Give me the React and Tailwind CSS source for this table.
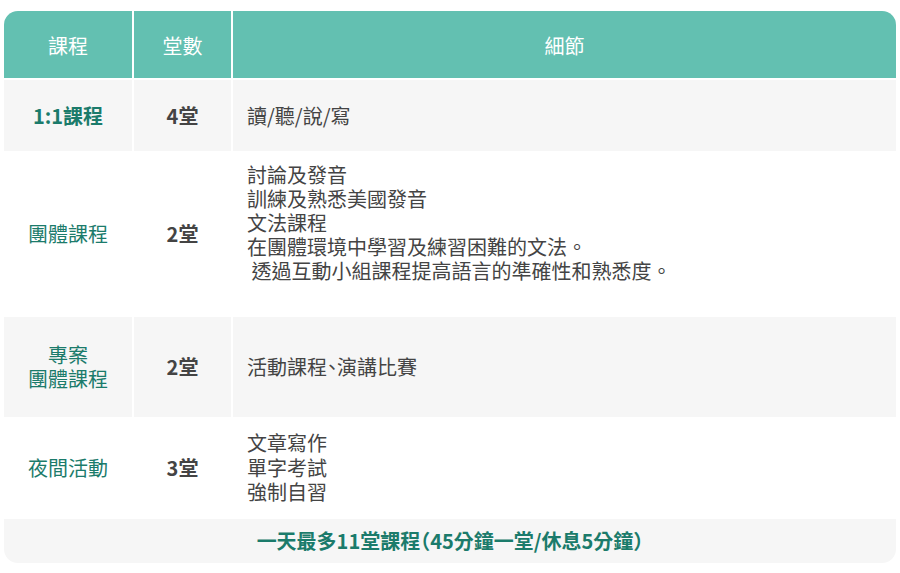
export default function App() {
    const headCell = 'flex items-center justify-center pt-[3px] bg-[#63c0b1] text-white text-[20px]'
    const nameCell = 'flex items-center justify-center text-center text-[#1b7b6b] text-[20px] leading-[24px]'
    const countCell = 'flex items-center justify-center text-[#444444] text-[20px] font-bold'
    const detailCell = 'flex items-center pl-[14px] text-[#444444] text-[20px] leading-[24px]'

    return (
        <div className="bg-white w-[900px] h-[573px] pt-[11px] pl-[4px]" style={{ fontFamily: '"Noto Sans CJK TC", "Noto Sans", sans-serif' }}>
            <div className="w-[892px] rounded-[14px] overflow-hidden flex flex-col">
                {/* Header */}
                <div className="grid grid-cols-[128px_97px_1fr] gap-x-[2px] h-[67px]">
                    <div className={headCell}>課程</div>
                    <div className={headCell}>堂數</div>
                    <div className={headCell}>細節</div>
                </div>

                {/* 1:1 */}
                <div className="grid grid-cols-[128px_97px_1fr] gap-x-[2px] h-[71px] mt-[2px]">
                    <div className={`${nameCell} bg-[#f6f6f6] font-bold`}>1:1課程</div>
                    <div className={`${countCell} bg-[#f6f6f6]`}>4堂</div>
                    <div className={`${detailCell} bg-[#f6f6f6]`}>讀/聽/說/寫</div>
                </div>

                {/* 團體課程 */}
                <div className="grid grid-cols-[128px_97px_1fr] gap-x-[2px] h-[166px]">
                    <div className={nameCell}>團體課程</div>
                    <div className={countCell}>2堂</div>
                    <div className="flex flex-col pl-[14px] pt-[12px] text-[#444444] text-[20px] leading-[24px]">
                        <span>討論及發音</span>
                        <span>訓練及熟悉美國發音</span>
                        <span>文法課程</span>
                        <span>在團體環境中學習及練習困難的文法。</span>
                        <span className="whitespace-pre"> 透過互動小組課程提高語言的準確性和熟悉度。</span>
                    </div>
                </div>

                {/* 專案 */}
                <div className="grid grid-cols-[128px_97px_1fr] gap-x-[2px] h-[100px]">
                    <div className={`${nameCell} bg-[#f6f6f6]`}>專案<br />團體課程</div>
                    <div className={`${countCell} bg-[#f6f6f6]`}>2堂</div>
                    <div className={`${detailCell} bg-[#f6f6f6] [font-feature-settings:'halt']`}>活動課程、演講比賽</div>
                </div>

                {/* 夜間活動 */}
                <div className="grid grid-cols-[128px_97px_1fr] gap-x-[2px] h-[102px]">
                    <div className={nameCell}>夜間活動</div>
                    <div className={countCell}>3堂</div>
                    <div className="flex flex-col justify-center pl-[14px] text-[#444444] text-[20px] leading-[24.5px]">
                        <span>文章寫作</span>
                        <span>單字考試</span>
                        <span>強制自習</span>
                    </div>
                </div>

                {/* Footer */}
                <div className="h-[44px] bg-[#f6f6f6] flex items-center justify-center text-[#1b7b6b] text-[20px] font-bold [font-feature-settings:'halt']">
                    一天最多11堂課程（45分鐘一堂/休息5分鐘）
                </div>
            </div>
        </div>
    )
}
